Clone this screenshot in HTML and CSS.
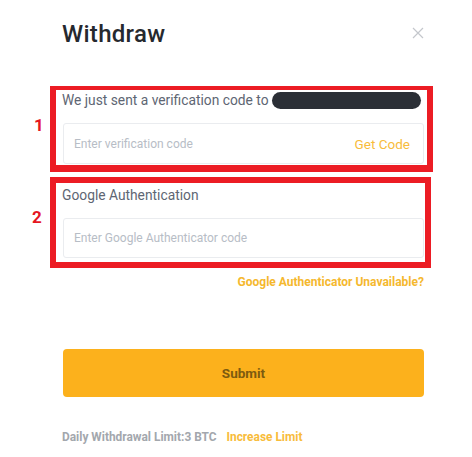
FILE: index.html
```
<!DOCTYPE html>
<html>
<head>
<meta charset="utf-8">
<link rel="stylesheet" href="styles.css">
</head>
<body>
<div class="modal">
  <div class="header">
    <h1 class="title">Withdraw</h1>
    <span class="close" aria-label="close">
      <svg width="12" height="12" viewBox="0 0 12 12"><path d="M1 1L11 11M11 1L1 11" stroke="#c4c7cc" stroke-width="1.2" fill="none"/></svg>
    </span>
  </div>

  <div class="mark mark-1">
    <span class="num num-1">1</span>
    <div class="label">We just sent a verification code to <span class="redact"></span></div>
    <div class="input input-1">
      <span class="ph">Enter verification code</span>
      <span class="get">Get Code</span>
    </div>
  </div>

  <div class="mark mark-2">
    <span class="num num-2">2</span>
    <div class="label">Google Authentication</div>
    <div class="input input-2">
      <span class="ph">Enter Google Authenticator code</span>
    </div>
  </div>

  <div class="unavail">Google Authenticator Unavailable?</div>

  <div class="submit">Submit</div>

  <div class="footer">Daily Withdrawal Limit:3 BTC <span class="inc">Increase Limit</span></div>
</div>
</body>
</html>
```

FILE: styles.css
```
* { box-sizing: border-box; }
html, body { margin: 0; padding: 0; background: #fff; }
body { font-family: Roboto, "Noto Sans", sans-serif; }

.modal {
  width: 472px;
  padding: 20px 48px 0 62px;
}
.header {
  display: flex;
  align-items: center;
  justify-content: space-between;
  height: 28px;
}
.title {
  margin: 0;
  font-size: 24px;
  line-height: 28px;
  font-weight: 500;
  color: #26292e;
  letter-spacing: 0.3px;
}
.close {
  display: flex;
  width: 12px;
  height: 12px;
  margin-top: -3px;
}

.mark {
  position: relative;
  border: 6px solid #ec1c24;
}
.mark-1 {
  margin: 38px -9px 0 -12px;
  border-top-width: 4px;
  border-bottom-width: 7px;
  padding: 1px 3px 1px 6px;
}
.mark-2 {
  margin: 5px -7px 0 -12px;
  padding: 3px 1px 4px 6px;
}
.num {
  position: absolute;
  font-size: 17px;
  line-height: 18px;
  font-weight: 700;
  color: #e5161f;
}
.num-1 { left: -22px; top: 26px; }
.num-2 { left: -24px; top: 25px; }

.label {
  display: flex;
  align-items: center;
  height: 18px;
  font-size: 13.8px;
  color: #5e6673;
}
.redact {
  display: inline-block;
  width: 149px;
  height: 17px;
  margin-left: 3px;
  border-radius: 9px;
  background: #2b2f36;
}
.input {
  display: flex;
  align-items: center;
  justify-content: space-between;
  margin: 14px 0 0 1px;
  height: 41px;
  padding: 0 13px 0 10px;
  border: 1px solid #eaecef;
  border-radius: 3px;
}
.input-2 { height: 40px; }
.ph {
  font-size: 12px;
  color: #b7bdc6;
}
.get {
  font-size: 13.5px;
  color: #f8bc3b;
}

.unavail {
  margin-top: 7px;
  text-align: right;
  font-size: 12px;
  line-height: 14px;
  font-weight: 700;
  color: #f5b82e;
}
.submit {
  margin: 60px 0 0 1px;
  height: 48px;
  display: flex;
  align-items: center;
  justify-content: center;
  background: #fcb11c;
  border-radius: 4px;
  font-size: 13.5px;
  font-weight: 700;
  color: #7d5b0f;
}
.footer {
  margin-top: 33px;
  font-size: 11.9px;
  line-height: 14px;
  font-weight: 700;
  color: #a3a7ad;
}
.inc {
  margin-left: 7px;
  color: #f8bc3b;
}
```
